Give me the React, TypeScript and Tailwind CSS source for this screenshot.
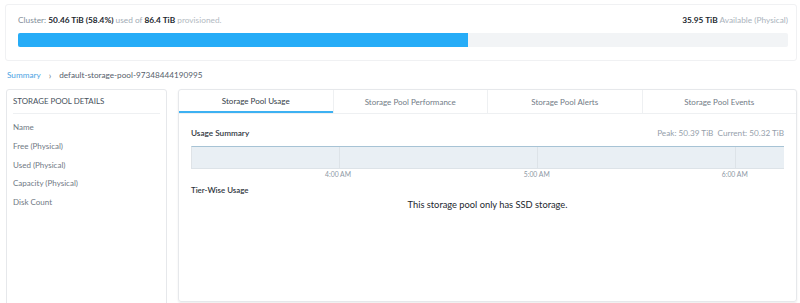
const details = ["Name", "Free (Physical)", "Used (Physical)", "Capacity (Physical)", "Disk Count"];
const tabs = ["Storage Pool Usage", "Storage Pool Performance", "Storage Pool Alerts", "Storage Pool Events"];
const ticks = [
  { label: "4:00 AM", pct: 24.8 },
  { label: "5:00 AM", pct: 58.3 },
  { label: "6:00 AM", pct: 91.7 },
];

export default function App() {
  return (
    <div
      className="w-[800px] h-[303px] overflow-hidden bg-white text-[#22272e]"
      style={{ fontFamily: "Lato, 'Open Sans', sans-serif" }}
    >
      {/* Cluster capacity card */}
      <div className="ml-[5px] mr-[3px] mt-[4px] h-[57px] border border-[#f0f1f3] rounded-[3px] pl-[12px] pr-[8px] pt-[9px]">
        <div className="flex justify-between text-[8.3px] leading-[12px]">
          <div>
            <span className="text-[#838e9a]">Cluster: </span>
            <span className="font-bold">50.46 TiB (58.4%)</span>
            <span className="text-[#a3acb6]"> used of </span>
            <span className="font-bold">86.4 TiB</span>
            <span className="text-[#b3bac2]"> provisioned.</span>
          </div>
          <div>
            <span className="font-bold">35.95 TiB</span>
            <span className="text-[#aab3bc]"> Available (Physical)</span>
          </div>
        </div>
        <div className="mt-[7px] h-[14px] bg-[#f2f4f6] rounded-[2px] overflow-hidden">
          <div className="h-full bg-[#26acf7]" style={{ width: "58.4%" }} />
        </div>
      </div>

      {/* Breadcrumb */}
      <div className="flex items-center h-[28px] pt-[1px] px-[7px] text-[8.2px]">
        <span className="text-[#4ba3e3]">Summary</span>
        <span className="mx-[8px] text-[#707a85] text-[9px] leading-none">›</span>
        <span className="text-[#55606b]">default-storage-pool-97348444190995</span>
      </div>

      <div className="flex gap-[11px] pl-[6px] pr-[3px]">
        {/* Details panel */}
        <div className="w-[161px] h-[220px] border border-[#e6e8eb] rounded-[3px] px-[6px] shrink-0">
          <div className="h-[24px] flex items-center text-[7.9px] text-[#46505b] border-b border-[#eef0f2]">
            STORAGE POOL DETAILS
          </div>
          <div className="pt-[4px] text-[8px] text-[#6f7984]">
            {details.map((d) => (
              <div key={d} className="h-[18.7px] flex items-center">
                {d}
              </div>
            ))}
          </div>
        </div>

        {/* Tabs panel */}
        <div className="flex-1 h-[213px] border border-[#e6e8eb] rounded-[3px] shadow-[0_1px_2px_rgba(0,0,0,0.08)]">
          <div className="flex h-[24px] border-b border-[#eef0f2]">
            {tabs.map((t, i) => (
              <div
                key={t}
                className={`flex-1 flex items-center justify-center text-[8px] ${
                  i > 0 ? "border-l border-[#eef0f2]" : ""
                } ${i === 0 ? "text-[#333b45] border-b-2 border-[#3db1f2]" : "text-[#717b86]"}`}
              >
                {t}
              </div>
            ))}
          </div>

          <div className="px-[12px] pt-[13px]">
            <div className="flex justify-between items-center text-[8.2px]">
              <span className="font-semibold text-[#2f3640]">Usage Summary</span>
              <span className="text-[#95a0ab]">Peak: 50.39 TiB&nbsp; Current: 50.32 TiB</span>
            </div>

            {/* Chart */}
            <div className="relative mt-[7px] h-[23px] bg-[#e9eff4] border-t border-[#a7c3d5] border-b border-b-[#dde3e8] border-l border-l-[#dfe3e7]">
              {ticks.map((tk) => (
                <div
                  key={tk.label}
                  className="absolute top-0 bottom-0 w-px bg-[#dde3e8]"
                  style={{ left: `${tk.pct}%` }}
                />
              ))}
            </div>
            <div className="relative h-[10px] text-[6.8px] leading-[10px] text-[#8d98a5]">
              {ticks.map((tk) => (
                <span
                  key={tk.label}
                  className="absolute top-0 -translate-x-1/2 whitespace-nowrap"
                  style={{ left: `${tk.pct}%` }}
                >
                  {tk.label}
                </span>
              ))}
            </div>

            <div className="mt-[5px] text-[7.9px] leading-[12px] font-semibold text-[#2f3640]">Tier-Wise Usage</div>
            <div className="mt-[2px] text-center text-[9.3px] leading-[14px] text-[#22272e]">
              This storage pool only has SSD storage.
            </div>
          </div>
        </div>
      </div>
    </div>
  );
}
